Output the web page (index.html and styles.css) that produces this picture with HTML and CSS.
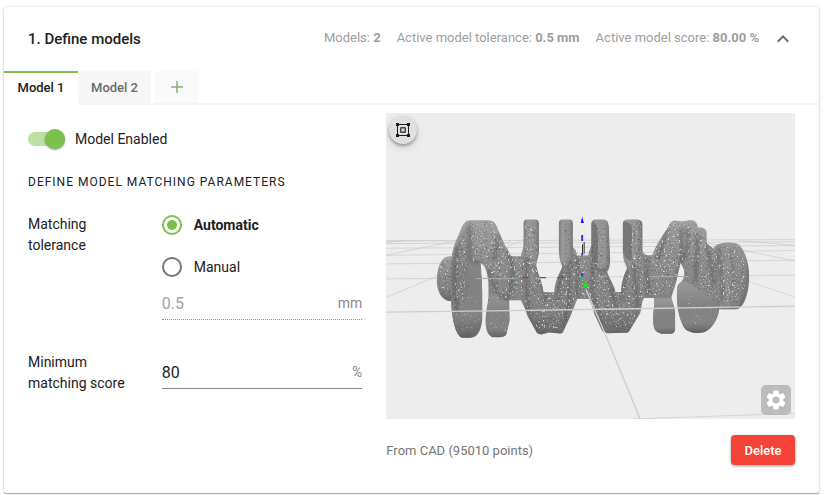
FILE: index.html
```html
<!DOCTYPE html>
<html lang="en">
<head>
<meta charset="utf-8">
<meta name="viewport" content="width=device-width, initial-scale=1">
<title>Define models</title>
<link rel="stylesheet" href="styles.css">
</head>
<body>
<main class="card">
  <header class="card-header">
    <h1 class="card-title">1. Define models</h1>
    <div class="summary">
      <span>Models: <b>2</b></span>
      <span>Active model tolerance: <b>0.5 mm</b></span>
      <span>Active model score: <b>80.00 %</b></span>
    </div>
    <button class="collapse" type="button" aria-label="Collapse">
      <svg viewBox="0 0 24 24" width="24" height="24"><path d="M12 8l-6 6 1.41 1.41L12 10.83l4.59 4.58L18 14z" fill="currentColor"/></svg>
    </button>
  </header>

  <nav class="tabs" role="tablist">
    <button class="tab tab-active" type="button" role="tab" aria-selected="true">Model 1</button>
    <button class="tab" type="button" role="tab" aria-selected="false">Model 2</button>
    <button class="tab tab-add" type="button" aria-label="Add model">
      <svg viewBox="0 0 12 12" width="12" height="12"><path d="M6 0v12M0 6h12" stroke="currentColor" stroke-width="1.5"/></svg>
    </button>
  </nav>

  <div class="content">
    <form class="settings">
      <label class="toggle"><input class="switch" type="checkbox" role="switch" checked>Model Enabled</label>
      <h2 class="section-title">Define model matching parameters</h2>

      <div class="row" role="radiogroup" aria-labelledby="tolerance-label">
        <div class="row-label" id="tolerance-label">Matching tolerance</div>
        <div class="row-fields">
          <label class="option option-selected"><input class="radio" type="radio" name="mode" checked>Automatic</label>
          <label class="option"><input class="radio" type="radio" name="mode">Manual</label>
          <div class="field field-disabled">
            <input class="field-input" id="tolerance" type="text" value="0.5" aria-label="Matching tolerance in mm" disabled>
            <label for="tolerance">mm</label>
          </div>
        </div>
      </div>

      <div class="row">
        <label class="row-label" for="score">Minimum matching score</label>
        <div class="row-fields">
          <div class="field">
            <input class="field-input" id="score" type="text" value="80">
            <span>%</span>
          </div>
        </div>
      </div>
    </form>

    <section class="preview">
      <div class="viewer">
        <svg class="scene" viewBox="0 0 1227 918" role="img" aria-label="Crankshaft point cloud">
          <defs>
            <linearGradient id="body" x1="0" y1="0" x2="0" y2="1">
              <stop offset="0" stop-color="#a2a2a2"/><stop offset=".35" stop-color="#8e8e8e"/><stop offset=".75" stop-color="#848484"/><stop offset="1" stop-color="#686868"/>
            </linearGradient>
            <linearGradient id="arm" x1="0" y1="0" x2="1" y2="0">
              <stop offset="0" stop-color="#7c7c7c"/><stop offset=".25" stop-color="#999"/><stop offset=".75" stop-color="#929292"/><stop offset="1" stop-color="#757575"/>
            </linearGradient>
            <linearGradient id="face" x1="0" y1="0" x2="0" y2="1">
              <stop offset="0" stop-color="#999"/><stop offset=".45" stop-color="#828282"/><stop offset=".8" stop-color="#838383"/><stop offset="1" stop-color="#656565"/>
            </linearGradient>
            <filter id="specks" x="0" y="0" width="1" height="1" color-interpolation-filters="sRGB">
              <feTurbulence type="fractalNoise" baseFrequency=".18 .15" numOctaves="2" seed="7"/>
              <feColorMatrix values="0 0 0 0 .88  0 0 0 0 .88  0 0 0 0 .88  6 0 0 0 -3.7"/>
              <feComposite in2="SourceGraphic" operator="in"/>
            </filter>
            <filter id="grain" x="0" y="0" width="1" height="1" color-interpolation-filters="sRGB">
              <feTurbulence type="fractalNoise" baseFrequency=".16" numOctaves="2" seed="21"/>
              <feColorMatrix values="0 0 0 0 .25  0 0 0 0 .25  0 0 0 0 .25  0 3 0 0 -1.6"/>
              <feComposite in2="SourceGraphic" operator="in"/>
            </filter>
            <filter id="soft" x="-.3" y="-.3" width="1.6" height="1.6"><feGaussianBlur stdDeviation="5"/></filter>
            <path id="outline" d="M195 552C188 480 193 410 218 365C228 340 235 321 252 321H305C324 320 331 333 337 350L359 400C371 411 368 429 380 429H405C409 410 413 405 413 390V330Q413 320 423 319H449Q459 320 459 331V415C459 432 452 440 451 455C454 480 468 500 473 537H505C507 500 524 475 530 460C521 443 520 430 519 410V330Q519 319 529 319H552Q561 320 561 331V402Q573 410 573 427H607Q610 407 617 400V330Q618 319 630 319H653Q668 320 669 339L673 440Q673 465 664 475C670 500 684 510 689 536H706C706 505 717 479 724 465C715 447 711 435 711 410V330Q713 319 726 319H755Q769 320 770 332V410C773 427 788 427 800 425C810 395 831 367 845 345Q855 321 868 322Q890 327 908 321H920Q932 322 938 343Q963 342 963 360V391L982 405L994 394C1018 384 1055 387 1062 397C1083 420 1092 465 1090 500C1088 550 1071 587 1050 588H1000C998 620 975 650 955 657Q920 664 900 650C877 620 870 565 875 520C880 503 898 510 895 470L885 448Q876 480 872 505L857 552C863 580 868 580 868 600V649Q867 661 855 662H827Q804 657 803 635C800 590 808 580 805 554H775C768 560 767 590 763 600L730 655Q725 661 715 659L665 660L650 654L625 602C622 580 615 570 609 557H574C568 575 560 590 557 602L531 658Q527 663 516 660L489 658L466 664Q453 663 451 656L424 607C418 585 410 570 405 561H370C370 585 371 600 371 622L361 665Q355 672 341 672H319Q303 664 300 640C296 605 307 570 308 550L307 500C302 475 300 457 284 450Q288 490 289 535V620C285 658 272 674 252 674H228C210 665 196 620 195 552z"/>
            <clipPath id="inside"><use href="#outline"/></clipPath>
            <clipPath id="inside-all"><use href="#outline"/><path d="M198 430C172 424 157 450 153 490C150 525 162 556 186 563H205V430z"/></clipPath>
          </defs>

          <g fill="none" stroke="#c9c9c9" stroke-width="2">
            <path d="M0 383L600 381L1227 379M0 391L1227 386M0 405L1227 397M0 426L1227 412M0 452L1227 441M0 497L1227 486M0 383L200 382M0 426L210 383M0 553L420 376M330 396L375 384M930 382L1227 443M1060 382L1227 396M1060 494L1227 552M0 388L60 382M730 918L1227 901"/>
          </g>

          <path fill="url(#body)" d="M198 430C172 424 157 450 153 490C150 525 162 556 186 563H205V430z"/>
          <use href="#outline" fill="url(#body)"/>

          <g clip-path="url(#inside)">
            <path fill="url(#face)" d="M195 550C194 460 206 390 232 352Q240 330 252 330L257 449L285 452C283 476 292 500 289 600C285 650 272 674 250 674H228C205 667 195 620 195 550z"/>
            <path fill="url(#face)" d="M309 553Q340 520 369 570L371 625L361 665Q355 672 341 672H319Q303 664 300 640C296 605 307 575 309 553z"/>
            <path fill="url(#arm)" d="M413 390V330Q413 320 423 319H449Q459 320 459 331V415L451 455L417 425z"/>
            <path fill="url(#arm)" d="M519 410V330Q519 319 529 319H552Q561 320 561 331V447L545 467L530 460z"/>
            <path fill="url(#arm)" d="M616 410V330Q618 319 630 319H653Q668 320 669 339L673 440Q673 460 661 466L628 465Q617 450 616 410z"/>
            <path fill="#777" d="M616 410V330Q624 322 632 335Q641 395 632 465Q617 450 616 410z"/>
            <path fill="url(#arm)" d="M711 410V330Q713 319 726 319H755Q769 320 770 332V410L760 440L735 455Q715 440 711 410z"/>
            <path fill="#777" d="M711 410V330Q724 320 738 338V445Q717 440 711 410z"/>
            <path fill="url(#face)" d="M803 635C800 590 808 575 805 554H857C863 580 868 580 868 600V649Q867 661 855 662H827Q804 657 803 635z"/>
            <path fill="url(#face)" d="M875 518Q883 502 906 507L1001 561C1007 600 985 645 955 657Q920 664 900 650C877 620 870 565 875 518z"/>
            <path fill="url(#arm)" opacity=".7" d="M987 420Q1005 390 1030 400Q1060 470 1030 588H1003Q1000 545 988 510z"/>
          </g>

          <g clip-path="url(#inside)">
            <g fill="none" stroke="#555" stroke-width="11" opacity=".45" filter="url(#soft)">
              <path d="M252 340V440L281 450M307 470L335 545L370 560M339 365L325 440M364 410Q395 490 365 550M423 430Q416 520 430 600L455 655M451 460L480 545L476 570M529 462L515 560M552 440L550 570L530 640M575 430V550M620 440V550L650 640M667 480L690 580M724 465L704 560M745 450L755 590M780 430L790 550M845 350L815 440M887 345V448L868 500M935 360L930 500M963 390L985 510M1000 400L1010 570M215 400Q196 500 215 600M905 345Q910 390 895 440M522 450Q545 478 561 450M618 455Q640 485 670 465M1088 440Q1092 530 1060 590H1000M455 662H530M665 662H730M230 672H255M910 660H955"/>
            </g>
          </g>

          <g clip-path="url(#inside-all)">
            <g fill="#000" filter="url(#grain)" opacity=".5">
              <path d="M158 440H205V553H160zM200 420L245 340L250 545L205 600zM250 325H320L360 410L415 430V335H455V450L480 540H505L535 460V330H558V425H610V335H668V475L690 536H706L730 460V325H766V425H800L850 330H930L980 405L1060 395L1085 480L1070 580H1005L940 530L890 500L885 450L855 552H775L735 650L655 652L612 557H574L530 655L455 658L405 561H305L300 450L260 445z"/>
            </g>
            <g fill="#fff" filter="url(#specks)">
              <path d="M160 440H185V553H165zM210 430L240 350L242 480L230 560L205 550zM252 330H320L360 405L415 430V335H452V450L480 540H505L535 475V440H555L573 427H610L664 480L690 540H706L730 460L740 330H766V425H800L850 330L930 328L980 405L1060 395L1085 480L1070 560L1005 575L940 520L936 445H885L855 545H775L735 640L655 642L612 557H574L530 645L455 648L405 555H325L300 450L260 442z"/>
              <path opacity=".45" d="M205 550H270L285 620L245 665L210 630zM305 590H365V655L315 650zM635 340H660V450L645 455zM890 540L990 575L930 640z"/>
            </g>
          </g>

          <g fill="none" stroke="#cfcfcf" stroke-width="3">
            <path d="M0 597L600 589L1227 579" stroke-width="4"/>
            <path d="M270 496H390M790 490H910" stroke="#aaa"/>
            <path d="M601 530L655 655L763 918" stroke-width="4"/>
          </g>
          <path d="M411 493h16M462 493h18M515 493h9M528 493h7" stroke="#f21818" stroke-width="4"/>
          <path d="M589 365v18M589 420v7M589 480v10" stroke="#3434ee" stroke-width="6"/>
          <path d="M585 329L589 310L594 329z" fill="#1010ff"/>
          <path d="M595 386V421M590 423V393" stroke="#333" stroke-width="3"/>
          <path d="M589 492L599 517" stroke="#22cf22" stroke-width="4" stroke-dasharray="7 3"/>
          <circle cx="600" cy="517" r="6" fill="#00f51a"/>
        </svg>
        <button class="fit" type="button" aria-label="Fit to view">
          <svg viewBox="0 0 14 14" width="14" height="14"><path d="M1.500 1.500h11v11h-11z" fill="none" stroke="#1c1c1c"/><path d="M0 0h3v3H0zM11 0h3v3h-3zM0 11h3v3H0zM11 11h3v3h-3z" fill="#1c1c1c"/><rect x="4.750" y="4.750" width="4.500" height="4.500" rx=".5" fill="none" stroke="#444" stroke-width="1.500"/></svg>
        </button>
        <button class="gear" type="button" aria-label="Viewer settings">
          <svg viewBox="0 0 24 24" width="24" height="24"><path fill="#fff" d="M19.140 12.940c.04-.3.060-.61.060-.94 0-.32-.02-.64-.07-.94l2.030-1.580c.18-.14.230-.41.120-.61l-1.920-3.320c-.12-.22-.37-.29-.59-.22l-2.390.96c-.5-.38-1.030-.7-1.620-.94l-.36-2.540c-.04-.24-.24-.41-.48-.41h-3.840c-.24 0-.43.17-.47.41l-.36 2.540c-.59.24-1.130.57-1.620.94l-2.390-.96c-.22-.08-.47 0-.59.22L2.740 8.870c-.12.21-.08.47.12.61l2.030 1.580c-.05.3-.09.63-.09.94s.02.64.07.94l-2.030 1.580c-.18.14-.23.41-.12.61l1.920 3.320c.12.22.37.29.59.22l2.390-.96c.5.38 1.030.7 1.620.94l.36 2.540c.05.24.24.41.48.41h3.840c.24 0 .44-.17.47-.41l.36-2.540c.59-.24 1.130-.56 1.620-.94l2.390.96c.22.08.47 0 .59-.22l1.920-3.320c.12-.22.07-.47-.12-.61l-2.010-1.580zM12 15.600c-1.980 0-3.600-1.620-3.600-3.600s1.620-3.600 3.600-3.600 3.600 1.620 3.600 3.600-1.620 3.600-3.600 3.600z"/></svg>
        </button>
      </div>
      <footer class="preview-footer">
        <span>From CAD (95010 points)</span>
        <button class="delete" type="button">Delete</button>
      </footer>
    </section>
  </div>
</main>
</body>
</html>
```
FILE: styles.css
```css
* { box-sizing: border-box; }

body {
  margin: 0;
  padding: 7px 9px 2px 4px;
  background: #fff;
  color: #212121;
  font: 14px/21px Roboto, "Liberation Sans", sans-serif;
}

button, input { margin: 0; font: inherit; color: inherit; }
button { padding: 0; border: 0; background: none; cursor: pointer; }
svg { display: block; }

.card {
  padding-bottom: 28px;
  border-radius: 2px;
  background: #fff;
  box-shadow: 0 1px 1px rgba(0, 0, 0, .32), 0 0 3px rgba(0, 0, 0, .2);
}

.card-header {
  display: flex;
  align-items: center;
  height: 64px;
  padding: 0 24px;
}

.card-title { margin: 0; font-size: 15px; font-weight: 500; }

.summary {
  display: flex;
  gap: 16px;
  margin: 0 12px 4px auto;
  color: #9e9e9e;
  font-size: 13px;
}
.summary b { font-weight: 700; }
.collapse { color: #616e7c; }

.tabs {
  display: flex;
  height: 34px;
  background: linear-gradient(#f5f5f5, #f5f5f5) bottom / 100% 2px no-repeat;
}
.tab {
  width: 73px;
  height: 32px;
  background: #f7f7f7;
  color: #6b6b6b;
  font-size: 13px;
  font-weight: 500;
}
.tab-active {
  width: 74px;
  height: 34px;
  padding-bottom: 4px;
  border-top: 2px solid #7bc04b;
  background: #fff;
  color: #212121;
}
.tab-add {
  display: grid;
  place-items: center;
  width: 44px;
  margin-left: 4px;
  background: #fafafa;
  color: #88ae72;
}

.content {
  display: grid;
  grid-template-columns: 9fr 11fr;
  gap: 24px;
  padding: 8px 24px 0;
}

.toggle {
  display: flex;
  align-items: center;
  gap: 10px;
  height: 52px;
}
.switch {
  appearance: none;
  display: flex;
  align-items: center;
  justify-content: flex-end;
  width: 37px;
  height: 14px;
  border-radius: 7px;
  background: #bde0a5;
}
.switch::before {
  content: "";
  width: 20px;
  height: 20px;
  border-radius: 50%;
  background: #7bc04b;
  box-shadow: 0 1px 2px rgba(0, 0, 0, .4);
}

.section-title {
  margin: 7px 0 22px;
  font-size: 12px;
  font-weight: 400;
  letter-spacing: 1px;
  line-height: 20px;
  text-transform: uppercase;
}

.row {
  display: grid;
  grid-template-columns: minmax(0, 2fr) minmax(0, 3fr);
  margin-bottom: 32px;
}
.row-label { max-width: 108px; }

.option {
  display: flex;
  align-items: center;
  gap: 12px;
  height: 22px;
  margin-bottom: 20px;
}
.option-selected { font-weight: 700; }
.radio {
  appearance: none;
  display: grid;
  place-items: center;
  width: 20px;
  height: 20px;
  border: 2px solid #757575;
  border-radius: 50%;
}
.radio:checked { border-color: #7bc04b; }
.radio:checked::before {
  content: "";
  width: 10px;
  height: 10px;
  border-radius: 50%;
  background: #7bc04b;
}

.field {
  display: flex;
  align-items: center;
  height: 37px;
  padding-top: 4px;
  border-bottom: 1px solid #8a8a8a;
  color: #8a8a8a;
}
.field-disabled {
  height: 28px;
  margin-top: -6px;
  padding: 0 0 4px;
  border-bottom-style: dotted;
}
.field-input {
  flex: 1;
  min-width: 0;
  padding: 0;
  border: 0;
  outline: 0;
  background: none;
  color: #212121;
  font-size: 16px;
}
.field-input:disabled { color: #a3a3a3; }

.viewer {
  position: relative;
  aspect-ratio: 4 / 3;
  overflow: hidden;
  background: #ededed;
}
.scene { width: 100%; height: 100%; }

.fit, .gear {
  position: absolute;
  display: grid;
  place-items: center;
}
.fit {
  top: 3px;
  left: 3px;
  width: 28px;
  height: 28px;
  border-radius: 50%;
  background: #e0e0e0;
  box-shadow: 0 2px 3px rgba(0, 0, 0, .3), 0 3px 10px rgba(0, 0, 0, .12);
}
.gear {
  right: 4px;
  bottom: 4px;
  width: 30px;
  height: 30px;
  border-radius: 5px;
  background: #bcbcbc;
}

.preview-footer {
  display: flex;
  align-items: center;
  justify-content: space-between;
  margin-top: 16px;
  color: #757575;
  font-size: 13px;
}
.delete {
  width: 64px;
  height: 30px;
  border-radius: 4px;
  background: #f44336;
  color: #fff;
  font-weight: 500;
  box-shadow: 0 1px 3px rgba(0, 0, 0, .4);
}
```
